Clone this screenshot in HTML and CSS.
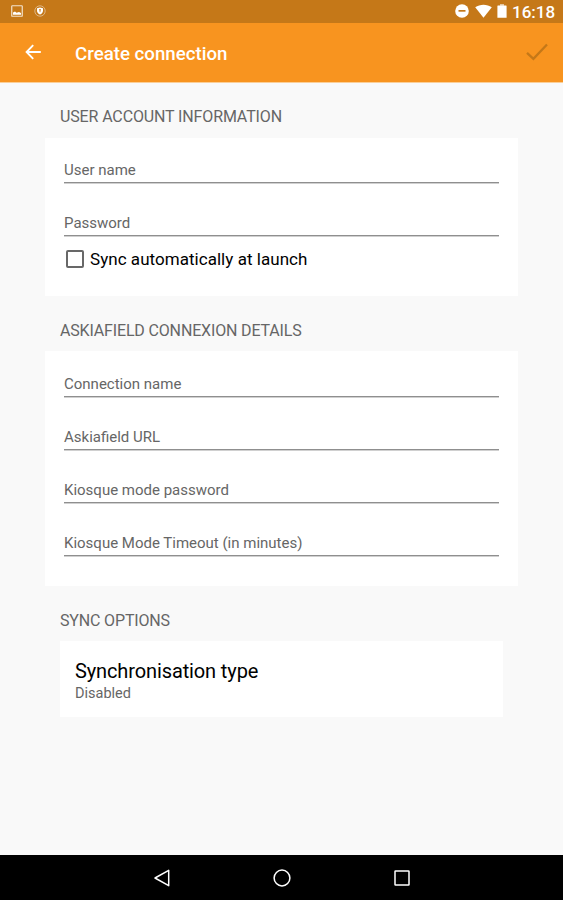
FILE: index.html
```html
<!DOCTYPE html>
<html lang="en">
<head>
<meta charset="utf-8">
<title>Create connection</title>
<link rel="stylesheet" href="styles.css">
</head>
<body>
<div class="status-bar">
  <div class="status-left">
    <svg class="icon-picture" width="12" height="12" viewBox="0 0 12 12"><rect x=".75" y=".75" width="10.5" height="10.5" rx=".6" fill="none" stroke="#f3e2cd" stroke-width="1.2"/><path d="M2 9.800V7.500L4 6.500L5.500 7.700L8 7L10 8V9.800Z" fill="#fff"/></svg>
    <svg class="icon-shield" width="12" height="12" viewBox="0 0 12 12"><circle cx="6" cy="6" r="5.2" fill="none" stroke="#e3c5a0" stroke-width=".8"/><path d="M6 2.400L9 3.300V5.800C9 7.600 7.700 8.900 6 9.600C4.300 8.900 3 7.600 3 5.800V3.300Z" fill="#fff"/><path d="M6 4.200V7.200M5 4.800H7" stroke="#c57818" stroke-width=".8"/></svg>
  </div>
  <div class="status-right">
    <svg width="14" height="14" viewBox="0 0 14 14"><circle cx="7" cy="7" r="6.800" fill="#fff"/><rect x="3.500" y="6" width="7" height="1.700" fill="#c57818"/></svg>
    <svg class="icon-wifi" width="17" height="14" viewBox="0 0 17 14"><path d="M.2 3.300C5 -.2 12 -.2 16.800 3.300L8.500 13.700Z" fill="#fff"/></svg>
    <svg class="icon-battery" width="10" height="14" viewBox="0 0 10 14"><rect x="3" y="0" width="4" height="2" fill="#e3c5a0"/><rect x=".4" y="1.600" width="9.200" height="12.200" rx=".4" fill="#fff"/></svg>
    <span class="clock">16:18</span>
  </div>
</div>
<header class="app-bar">
  <svg class="icon-back" width="16" height="16" viewBox="0 0 16 16"><path d="M15.800 8H1.800M8.200 1.200L1.600 8L8.200 14.800" fill="none" stroke="#fff" stroke-width="1.900"/></svg>
  <h1>Create connection</h1>
  <svg class="icon-check" width="22" height="18" viewBox="0 0 22 18"><path d="M1 9.800L7.400 15.800L21 1.500" fill="none" stroke="#c57818" stroke-width="2.300"/></svg>
</header>
<main>
  <h2>USER ACCOUNT INFORMATION</h2>
  <section class="card account">
    <div class="field">User name</div>
    <div class="field">Password</div>
    <div class="check-row"><span class="checkbox"></span><span>Sync automatically at launch</span></div>
  </section>
  <h2>ASKIAFIELD CONNEXION DETAILS</h2>
  <section class="card details">
    <div class="field">Connection name</div>
    <div class="field">Askiafield URL</div>
    <div class="field">Kiosque mode password</div>
    <div class="field">Kiosque Mode Timeout (in minutes)</div>
  </section>
  <h2>SYNC OPTIONS</h2>
  <section class="option">
    <div class="option-title">Synchronisation type</div>
    <div class="option-value">Disabled</div>
  </section>
</main>
<nav class="nav-bar">
  <svg width="18" height="20" viewBox="0 0 18 20"><path d="M15.700 2.300V17.700L2 10Z" fill="none" stroke="#fff" stroke-width="1.500" stroke-linejoin="round"/></svg>
  <svg width="18" height="20" viewBox="0 0 18 20"><circle cx="9" cy="10" r="7.900" fill="none" stroke="#fff" stroke-width="1.500"/></svg>
  <svg width="18" height="20" viewBox="0 0 18 20"><rect x="2" y="3" width="14" height="14" rx=".5" fill="none" stroke="#fff" stroke-width="1.500"/></svg>
</nav>
</body>
</html>
```
FILE: styles.css
```css
* { box-sizing: border-box; }
body {
  margin: 0;
  height: 900px;
  display: flex;
  flex-direction: column;
  background: #f9f9f9;
  color: #666;
  font-family: Roboto, sans-serif;
  overflow: hidden;
}
svg { display: block; flex: none; }
h1, h2 { margin: 0; font-weight: 400; }
.status-bar {
  flex: none;
  height: 23px;
  padding: 0 8px 0 11px;
  display: flex;
  justify-content: space-between;
  background: #c57818;
}
.status-left, .status-right { display: flex; }
.status-left { padding-top: 5px; gap: 11px; }
.status-right { padding-top: 4px; }
.icon-wifi { margin-left: 6px; }
.icon-battery { margin-left: 5px; }
.clock {
  width: 43px;
  margin: -1px 0 0 5.500px;
  color: #fff;
  font-size: 17px;
  font-weight: 500;
  line-height: 18px;
  white-space: nowrap;
}
.app-bar {
  flex: none;
  height: 60px;
  padding: 0 15px 2px 25px;
  display: flex;
  align-items: center;
  background: #f8941f;
  border-bottom: 1px solid #fbcf98;
}
.app-bar h1 {
  margin: 4px auto 0 34px;
  color: #fff;
  font-size: 18.700px;
  font-weight: 500;
}
main { flex: 1; }
h2 {
  height: 55px;
  padding: 24px 0 0 60px;
  font-size: 16px;
  letter-spacing: -.13px;
  line-height: 20px;
}
.card + h2 { padding-top: 25px; letter-spacing: -.16px; }
.card {
  margin: 0 45px;
  padding: 0 19px;
  background: #fff;
}
.account { height: 158px; }
.details { height: 235px; }
.field {
  height: 53px;
  padding-top: 31px;
  border-bottom: 1px solid #8f8f8f;
  box-shadow: 0 1px #d0d0d0;
  font-size: 15px;
  line-height: 18px;
}
.field:first-child { height: 45px; padding-top: 23px; }
.details .field:first-child { height: 46px; padding-top: 24px; }
.check-row {
  display: flex;
  align-items: center;
  height: 46px;
  padding-left: 2px;
  gap: 6px;
  color: #000;
  font-size: 17px;
  letter-spacing: .04px;
}
.checkbox {
  width: 18px;
  height: 18px;
  border: 2px solid #686868;
  border-radius: 2px;
}
.option {
  height: 76px;
  margin: 0 60px;
  padding: 18px 15px 0;
  background: #fff;
}
.option-title { color: #000; font-size: 20px; letter-spacing: -.12px; line-height: 25px; }
.option-value { font-size: 14.500px; line-height: 20px; }
.nav-bar {
  flex: none;
  height: 45px;
  display: flex;
  justify-content: center;
  align-items: center;
  gap: 102px;
  background: #000;
}
```
